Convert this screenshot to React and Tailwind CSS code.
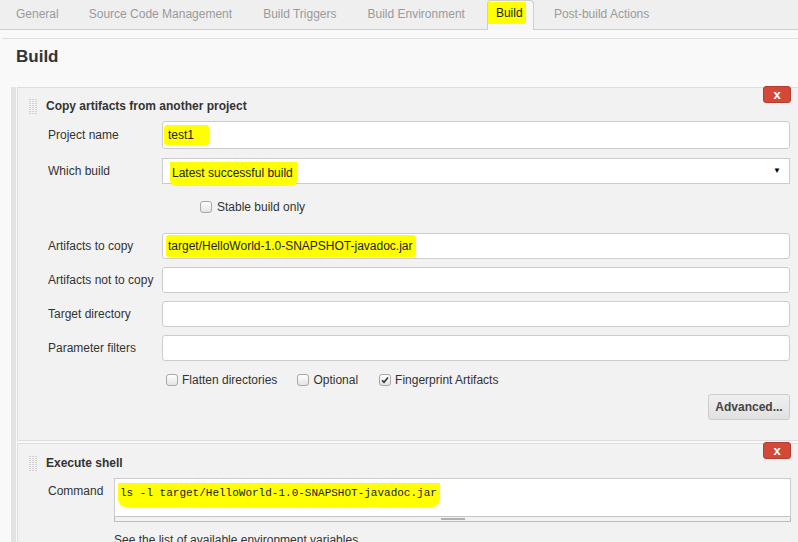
import React from 'react';

const Grip = () => (
  <svg width="9" height="15" viewBox="0 0 9 15" className="shrink-0">
    {[0, 2, 4, 6, 8, 10, 12, 14].map((y) =>
      [0, 3, 6].map((x) => <rect key={x + '-' + y} x={x} y={y} width="2" height="1" fill="#d2d2d2" />)
    )}
  </svg>
);

const CloseBtn = () => (
  <div className="absolute -top-[2px] right-[10px] w-[28px] h-[17px] rounded-[3px] bg-[#d24939] border border-[#b83c2e] flex items-center justify-center text-white text-[13px] font-bold leading-none pb-[1px]">
    x
  </div>
);

const Check = ({ checked }) => (
  <span className="w-[12px] h-[12px] shrink-0 rounded-[3px] border border-[#a8a8a8] bg-gradient-to-b from-white to-[#e4e4e4] flex items-center justify-center">
    {checked && (
      <svg width="8" height="8" viewBox="0 0 8 8">
        <path d="M1 4.2 L3 6.3 L7 1.5" stroke="#333" strokeWidth="1.6" fill="none" />
      </svg>
    )}
  </span>
);

const Field = ({ label, h = 'h-[26px]', children }) => (
  <div className="flex items-center">
    <div className="w-[144px] pl-[30px] text-[12px] text-[#333] shrink-0">{label}</div>
    <div className={`flex-1 ${h} bg-white border border-[#cccccc] rounded-[3px] flex items-center`}>{children}</div>
  </div>
);

const PanelHead = ({ title, h }) => (
  <div className={`flex items-center ${h} pl-[11px] pt-[4px]`}>
    <Grip />
    <span className="ml-[8px] text-[12px] font-bold text-[#333]">{title}</span>
  </div>
);

export default function App() {
  return (
    <div className="w-[798px] h-[542px] overflow-hidden bg-[#f9f9f9] font-['Liberation_Sans',Arial,sans-serif] text-[#333]">
      {/* tabs */}
      <div className="h-[30px] bg-[#efefef] border-b border-[#cfcfcf] flex items-end text-[12px] text-[#9a9a9a]">
        <span className="ml-[16px] h-[29px] pb-[2px] flex items-center">General</span>
        <span className="ml-[30px] h-[29px] pb-[2px] flex items-center">Source Code Management</span>
        <span className="ml-[31px] h-[29px] pb-[2px] flex items-center">Build Triggers</span>
        <span className="ml-[31px] h-[29px] pb-[2px] flex items-center">Build Environment</span>
        <div className="ml-[22px] h-[30px] -mb-[1px] w-[47px] border border-b-0 border-[#cfcfcf] rounded-t-[4px] bg-[#f7f7f7] flex items-start">
          <span className="mt-[1px] h-[22px] w-[38px] bg-[#ffff00] rounded-br-[3px] flex items-center pl-[8px] text-[#222]">Build</span>
        </div>
        <span className="ml-[20px] h-[29px] pb-[2px] flex items-center">Post-build Actions</span>
      </div>

      <div className="mt-[8px] ml-[2px] border-t border-[#dddddd]" />
      <div className="h-[36px] pl-[16px] flex items-center text-[17px] font-bold text-[#333]">Build</div>

      <div className="mt-[12px] pl-[11px] flex">
        <div className="w-[5px] bg-[#e2e2e2] shrink-0" />
        <div className="ml-[1px] w-[785px] shrink-0 flex flex-col">
          {/* copy artifacts panel */}
          <div className="relative bg-[#f2f2f2] border border-[#dddddd] pr-[11px] pb-[20px]">
            <CloseBtn />
            <PanelHead title="Copy artifacts from another project" h="h-[32px]" />
            <div className="mt-[1px]">
              <Field label="Project name" h="h-[28px]">
                <span className="ml-[1px] h-[20px] w-[45px] bg-[#ffff00] rounded-[3px] flex items-center pl-[4px] text-[12px] text-[#222]">test1</span>
              </Field>
            </div>
            <div className="mt-[9px] flex items-center">
              <div className="w-[144px] pl-[30px] text-[12px] shrink-0">Which build</div>
              <div className="flex-1 h-[26px] bg-white border border-[#cccccc] flex items-center justify-between relative">
                <span className="ml-[7px] mt-[6px] h-[24px] w-[127px] bg-[#ffff00] rounded-b-[6px] flex items-start pt-[2px] pl-[2px] text-[12px] text-[#222] relative z-10">
                  Latest successful build
                </span>
                <span className="mr-[8px] text-[8px] text-black leading-none">▼</span>
              </div>
            </div>
            <div className="mt-[15px] h-[16px] flex items-center pl-[182px] text-[12px]">
              <Check />
              <span className="ml-[5px]">Stable build only</span>
            </div>
            <div className="mt-[18px] flex flex-col gap-[8px]">
              <Field label="Artifacts to copy">
                <span className="ml-[3px] h-[22px] whitespace-nowrap bg-[#ffff00] rounded-[3px] flex items-center pl-[2px] pr-[3px] text-[12px] text-[#222]">
                  target/HelloWorld-1.0-SNAPSHOT-javadoc.jar
                </span>
              </Field>
              <Field label="Artifacts not to copy" />
              <Field label="Target directory" />
              <Field label="Parameter filters" />
            </div>
            <div className="mt-[11px] h-[16px] flex items-center pl-[148px] text-[12px]">
              <Check />
              <span className="ml-[4px]">Flatten directories</span>
              <span className="ml-[20px]"><Check /></span>
              <span className="ml-[4px]">Optional</span>
              <span className="ml-[21px]"><Check checked /></span>
              <span className="ml-[4px]">Fingerprint Artifacts</span>
            </div>
            <div className="mt-[6px] flex justify-end">
              <div className="w-[82px] h-[26px] rounded-[3px] border border-[#cccccc] bg-gradient-to-b from-[#f0f0f0] to-[#e1e1e1] flex items-center justify-center text-[12px] font-bold text-[#444]">
                Advanced...
              </div>
            </div>
          </div>

          {/* execute shell panel */}
          <div className="relative mt-[2px] bg-[#f2f2f2] border border-[#dddddd] pr-[10px] h-[120px]">
            <CloseBtn />
            <PanelHead title="Execute shell" h="h-[34px]" />
            <div className="flex">
              <div className="w-[96px] pl-[30px] h-[26px] flex items-center text-[12px] shrink-0">Command</div>
              <div className="flex-1 flex flex-col">
                <div className="h-[39px] bg-white border border-[#cccccc] border-b-[#c4c4c4]">
                  <span className="inline-block ml-[3px] mt-[2px] h-[24px] w-[322px] bg-[#ffff00] rounded-b-[8px] pl-[2px] pt-[3px] font-['Liberation_Mono',monospace] text-[11px] leading-[14px] text-[#222] whitespace-nowrap">
                    ls -l target/HelloWorld-1.0-SNAPSHOT-javadoc.jar
                  </span>
                </div>
                <div className="h-[5px] border border-t-0 border-[#bdbdbd] flex justify-center items-center">
                  <div className="w-[24px] h-[2px] bg-[#b0b0b0]" />
                </div>
                <div className="mt-[9px] text-[12px] text-[#333]">See the list of available environment variables</div>
              </div>
            </div>
          </div>
        </div>
      </div>
    </div>
  );
}
